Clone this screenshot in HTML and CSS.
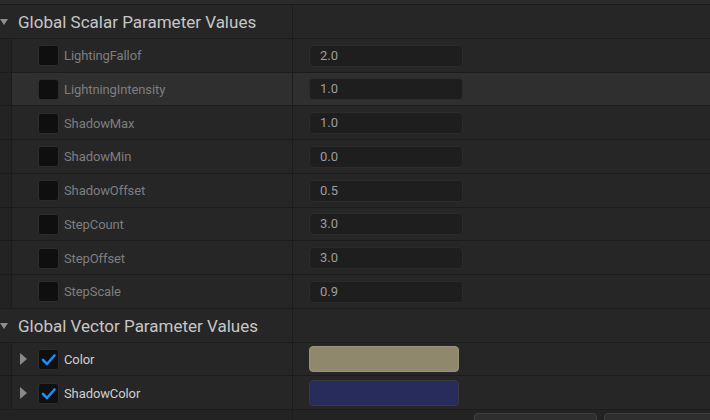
FILE: index.html
```html
<!DOCTYPE html>
<html>
<head>
<meta charset="utf-8">
<link rel="stylesheet" href="styles.css">
</head>
<body>
<div class="panel">
  <div class="topbar"></div>

  <div class="row section">
    <div class="name-cell">
      <span class="caret-down"></span>
      <span class="section-title">Global Scalar Parameter Values</span>
    </div>
    <div class="value-cell"></div>
  </div>

  <div class="row item">
    <div class="name-cell"><span class="gutter"></span><span class="check"></span><span class="label dim">LightingFallof</span></div>
    <div class="value-cell"><span class="num">2.0</span></div>
  </div>
  <div class="row item hover">
    <div class="name-cell"><span class="gutter"></span><span class="check"></span><span class="label dim">LightningIntensity</span></div>
    <div class="value-cell"><span class="num">1.0</span></div>
  </div>
  <div class="row item">
    <div class="name-cell"><span class="gutter"></span><span class="check"></span><span class="label dim">ShadowMax</span></div>
    <div class="value-cell"><span class="num">1.0</span></div>
  </div>
  <div class="row item">
    <div class="name-cell"><span class="gutter"></span><span class="check"></span><span class="label dim">ShadowMin</span></div>
    <div class="value-cell"><span class="num">0.0</span></div>
  </div>
  <div class="row item">
    <div class="name-cell"><span class="gutter"></span><span class="check"></span><span class="label dim">ShadowOffset</span></div>
    <div class="value-cell"><span class="num">0.5</span></div>
  </div>
  <div class="row item">
    <div class="name-cell"><span class="gutter"></span><span class="check"></span><span class="label dim">StepCount</span></div>
    <div class="value-cell"><span class="num">3.0</span></div>
  </div>
  <div class="row item">
    <div class="name-cell"><span class="gutter"></span><span class="check"></span><span class="label dim">StepOffset</span></div>
    <div class="value-cell"><span class="num">3.0</span></div>
  </div>
  <div class="row item">
    <div class="name-cell"><span class="gutter"></span><span class="check"></span><span class="label dim">StepScale</span></div>
    <div class="value-cell"><span class="num">0.9</span></div>
  </div>

  <div class="row section">
    <div class="name-cell">
      <span class="caret-down"></span>
      <span class="section-title">Global Vector Parameter Values</span>
    </div>
    <div class="value-cell"></div>
  </div>

  <div class="row item">
    <div class="name-cell"><span class="gutter"></span><span class="caret-right"></span><span class="check on"><svg viewBox="0 0 21 21" width="21" height="21"><path d="M5 11 L9 15 L16.5 6.5" fill="none" stroke="#1f8cf6" stroke-width="2.6" stroke-linecap="round" stroke-linejoin="round"/></svg></span><span class="label">Color</span></div>
    <div class="value-cell"><span class="swatch khaki"></span></div>
  </div>
  <div class="row item">
    <div class="name-cell"><span class="gutter"></span><span class="caret-right"></span><span class="check on"><svg viewBox="0 0 21 21" width="21" height="21"><path d="M5 11 L9 15 L16.5 6.5" fill="none" stroke="#1f8cf6" stroke-width="2.6" stroke-linecap="round" stroke-linejoin="round"/></svg></span><span class="label">ShadowColor</span></div>
    <div class="value-cell"><span class="swatch navy"></span></div>
  </div>

  <div class="footer">
    <div class="name-cell foot-left"></div>
    <div class="value-cell foot-right">
      <span class="btn b1"></span>
      <span class="btn b2"></span>
    </div>
  </div>
</div>
</body>
</html>
```

FILE: styles.css
```css
html, body {
  margin: 0;
  padding: 0;
  width: 710px;
  height: 420px;
  overflow: hidden;
  background: #232323;
  font-family: Roboto, "Noto Sans", sans-serif;
}

.panel {
  display: flex;
  flex-direction: column;
}

.topbar {
  height: 4px;
  background: #2b2b2b;
  border-bottom: 1px solid #1b1b1b;
}

.row {
  display: grid;
  grid-template-columns: 293px 1fr;
  box-sizing: border-box;
  height: 33.75px;
  border-bottom: 1px solid #1c1c1c;
  background: #262626;
}

.row.hover {
  background: #2f2f2f;
}

.name-cell {
  display: flex;
  align-items: center;
  height: 100%;
  box-sizing: border-box;
  border-right: 1px solid #1c1c1c;
}

.value-cell {
  display: flex;
  align-items: center;
  padding-left: 16px;
  height: 100%;
}

.caret-down {
  width: 0;
  height: 0;
  border-left: 4.5px solid transparent;
  border-right: 4.5px solid transparent;
  border-top: 6px solid #8e8e8e;
  margin-right: 10px;
  margin-top: 2px;
}

.section-title {
  color: #c6c6c6;
  font-size: 17px;
  margin-top: 2px;
}

.gutter {
  align-self: stretch;
  width: 11px;
  background: #232323;
  border-right: 1px solid #1c1c1c;
  margin-right: 26px;
  flex: none;
}

.caret-right {
  width: 0;
  height: 0;
  border-top: 6px solid transparent;
  border-bottom: 6px solid transparent;
  border-left: 7px solid #8a8a8a;
  margin-left: -18px;
  margin-right: 11px;
}

.check {
  flex: none;
  box-sizing: border-box;
  width: 21px;
  height: 21px;
  background: #0f0f0f;
  border: 1px solid #2c2c2c;
  border-radius: 3px;
  position: relative;
  margin-top: 1px;
}

.check svg {
  position: absolute;
  left: -1px;
  top: -1px;
}

.label {
  margin-left: 5px;
  font-size: 13px;
  letter-spacing: -0.1px;
  color: #cfcfcf;
  margin-top: 1px;
}

.label.dim {
  color: #7e7e7e;
}

.num {
  box-sizing: border-box;
  width: 154px;
  height: 22px;
  background: #1e1e1e;
  border: 1px solid #2b2b2b;
  border-radius: 4px;
  padding-left: 10px;
  font-size: 13px;
  line-height: 20px;
  color: #9c9c9c;
  margin-top: 1px;
}

.swatch {
  box-sizing: border-box;
  width: 150px;
  height: 26px;
  border-radius: 4px;
  margin-top: 1px;
}

.swatch.khaki {
  background: #8f886c;
  border: 1px solid #9a9478;
}

.swatch.navy {
  background: #282c5c;
  border: 1px solid #3a3a3e;
}

.footer {
  display: grid;
  grid-template-columns: 293px 1fr;
  height: 12px;
  background: #232323;
}

.foot-right {
  padding-left: 181px;
  align-items: flex-start;
  gap: 7px;
}

.btn {
  display: block;
  box-sizing: border-box;
  height: 14px;
  margin-top: 3px;
  background: #2e2e2e;
  border: 1px solid #3f3f3f;
  border-radius: 4px;
}

.btn.b1 { width: 123px; }
.btn.b2 { width: 120px; }
```
